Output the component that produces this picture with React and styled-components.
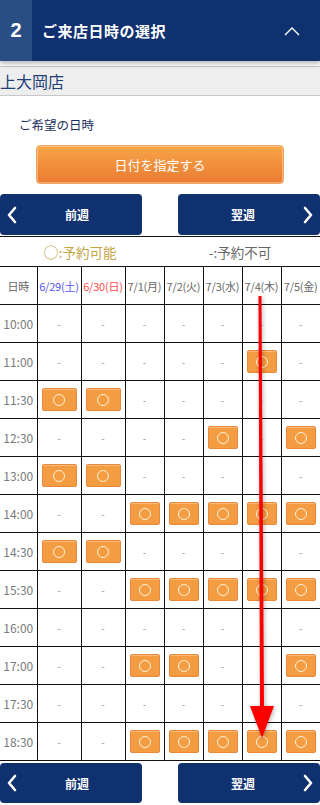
import React from "react";
import styled, { createGlobalStyle } from "styled-components";

const GlobalStyle = createGlobalStyle`
  body {
    margin: 0;
    background: #fff;
    font-family: "Noto Sans CJK JP", "Noto Sans", sans-serif;
  }
`;

const Page = styled.div`
  position: relative;
  width: 320px;
  overflow: hidden;
`;

const Header = styled.div`
  display: flex;
  height: 61px;
  background: #0f3170;
  color: #fff;
  box-shadow: 0 3px 4px rgba(0, 0, 0, 0.25);
  position: relative;
  z-index: 1;
`;

const StepNo = styled.div`
  width: 32px;
  display: flex;
  align-items: center;
  justify-content: center;
  background: #2a4d84;
  font-family: "Liberation Sans", sans-serif;
  font-weight: bold;
  font-size: 20px;
`;

const Title = styled.div`
  flex: 1;
  display: flex;
  align-items: center;
  padding-left: 10px;
  font-size: 15px;
  font-weight: bold;
  letter-spacing: 0.5px;
`;

const Toggle = styled.div`
  width: 40px;
  display: flex;
  align-items: center;
  justify-content: center;
  padding-right: 8px;
`;

const StoreBar = styled.div`
  margin-top: 5px;
  height: 28px;
  background: #eeeeee;
  border-top: 1px solid #c8c8c8;
  border-bottom: 1px solid #c8c8c8;
  display: flex;
  align-items: center;
  color: #1f3f78;
  font-size: 16px;
`;

const Label = styled.div`
  padding: 20px 0 0 19px;
  font-size: 12.5px;
  color: #1a2f5c;
  line-height: 18px;
`;

const DateButton = styled.button`
  display: block;
  margin: 11px auto 0;
  width: 248px;
  height: 39px;
  border: 1px solid #f0a460;
  border-radius: 4px;
  background: linear-gradient(#f7a548, #ea7a31);
  box-shadow: inset 0 0 0 1px rgba(255, 255, 255, 0.35);
  color: #fff;
  font-family: inherit;
  font-size: 13px;
`;

const WeekNav = styled.div`
  display: flex;
  justify-content: space-between;
  margin-top: ${(p) => p.$top}px;
`;

const WeekButton = styled.button`
  width: 142px;
  height: ${(p) => p.$h}px;
  background: #0f3170;
  border: none;
  border-radius: 4px;
  color: #fff;
  font-family: inherit;
  font-weight: bold;
  font-size: 12px;
  display: flex;
  align-items: center;
  padding: 0 6px;
  flex-direction: ${(p) => (p.$next ? "row-reverse" : "row")};
  span {
    flex: 1;
    text-align: center;
  }
`;

const Legend = styled.div`
  display: flex;
  margin-top: 1px;
  height: 29px;
  border-top: 1px solid #111;
  font-size: 13.5px;
`;

const LegendItem = styled.div`
  flex: 1;
  display: flex;
  align-items: center;
  justify-content: center;
  color: ${(p) => p.$color};
`;

const Mark = styled.span`
  font-size: 15px;
`;

const Table = styled.table`
  width: 320px;
  border-collapse: collapse;
  table-layout: fixed;
  td, th {
    border: 1px solid #111;
    padding: 0;
    text-align: center;
    height: 37px;
  }
  tr > :first-child {
    border-left: none;
  }
  tr > :last-child {
    border-right: none;
  }
`;

const DayHead = styled.th`
  font-weight: normal;
  font-size: 11px;
  letter-spacing: -0.2px;
  white-space: nowrap;
  color: ${(p) => p.$color || "#666"};
`;

const TimeCell = styled.td`
  font-size: 12px;
  color: #7a7a7a;
`;

const SlotCell = styled.td`
  padding: 0 4px !important;
  color: #9a9a9a;
  font-size: 10px;
`;

const Slot = styled.div`
  height: 23px;
  margin: 0 auto;
  background: #f39c42;
  border: 1px solid #e9873a;
  border-radius: 2px;
  box-shadow: inset 0 1px 0 #f8bd7c;
  display: flex;
  align-items: center;
  justify-content: center;
  box-sizing: border-box;
`;

const Ring = styled.div`
  width: 12px;
  height: 12px;
  border: 1.3px solid #fff4dc;
  border-radius: 50%;
  box-sizing: border-box;
`;

const Arrow = styled.svg`
  position: absolute;
  left: 0;
  top: 0;
  pointer-events: none;
  filter: drop-shadow(1px 1px 2px rgba(0, 0, 0, 0.3));
`;

const Chevron = ({ dir }) => (
  <svg width="12" height="18" viewBox="0 0 12 18">
    <path
      d={dir === "left" ? "M9 2 L3 9 L9 16" : "M3 2 L9 9 L3 16"}
      fill="none"
      stroke="#fff"
      strokeWidth="2.6"
      strokeLinecap="round"
      strokeLinejoin="round"
    />
  </svg>
);

const days = [
  { label: "6/29(土)", color: "#5656f0" },
  { label: "6/30(日)", color: "#ff4d4d" },
  { label: "7/1(月)" },
  { label: "7/2(火)" },
  { label: "7/3(水)" },
  { label: "7/4(木)" },
  { label: "7/5(金)" },
];

const rows = [
  ["10:00", "0000000"],
  ["11:00", "0000010"],
  ["11:30", "1100000"],
  ["12:30", "0000101"],
  ["13:00", "1100000"],
  ["14:00", "0011111"],
  ["14:30", "1100000"],
  ["15:30", "0011111"],
  ["16:00", "0000000"],
  ["17:00", "0011001"],
  ["17:30", "0000000"],
  ["18:30", "0011111"],
];

const WeekRow = ({ top, h }) => (
  <WeekNav $top={top}>
    <WeekButton $h={h}>
      <Chevron dir="left" />
      <span>前週</span>
    </WeekButton>
    <WeekButton $h={h} $next>
      <Chevron dir="right" />
      <span>翌週</span>
    </WeekButton>
  </WeekNav>
);

export default function App() {
  return (
    <Page>
      <GlobalStyle />
      <Header>
        <StepNo>2</StepNo>
        <Title>ご来店日時の選択</Title>
        <Toggle>
          <svg width="16" height="10" viewBox="0 0 16 10">
            <path d="M1 9 L8 2 L15 9" fill="none" stroke="#fff" strokeWidth="1.4" />
          </svg>
        </Toggle>
      </Header>
      <StoreBar>上大岡店</StoreBar>
      <Label>ご希望の日時</Label>
      <DateButton>日付を指定する</DateButton>
      <WeekRow top={10} h={41} />
      <Legend>
        <LegendItem $color="#c4a443">
          <Mark>○</Mark>:予約可能
        </LegendItem>
        <LegendItem $color="#666">-:予約不可</LegendItem>
      </Legend>
      <Table>
        <colgroup>
          <col style={{ width: 37 }} />
          <col style={{ width: 44 }} />
          <col style={{ width: 44 }} />
          <col style={{ width: 39 }} />
          <col style={{ width: 39 }} />
          <col style={{ width: 39 }} />
          <col style={{ width: 39 }} />
          <col style={{ width: 39 }} />
        </colgroup>
        <thead>
          <tr>
            <DayHead>日時</DayHead>
            {days.map((d) => (
              <DayHead key={d.label} $color={d.color}>
                {d.label}
              </DayHead>
            ))}
          </tr>
        </thead>
        <tbody>
          {rows.map(([time, slots]) => (
            <tr key={time}>
              <TimeCell>{time}</TimeCell>
              {slots.split("").map((s, i) => (
                <SlotCell key={i}>
                  {s === "1" ? (
                    <Slot>
                      <Ring />
                    </Slot>
                  ) : (
                    "-"
                  )}
                </SlotCell>
              ))}
            </tr>
          ))}
        </tbody>
      </Table>
      <WeekRow top={2} h={40} />
      <Arrow width="320" height="805" viewBox="0 0 320 805">
        <polygon points="258.5,296 261.5,296 264,706 274,706 262,738 250,706 260,706" fill="#ff0000" />
      </Arrow>
    </Page>
  );
}
